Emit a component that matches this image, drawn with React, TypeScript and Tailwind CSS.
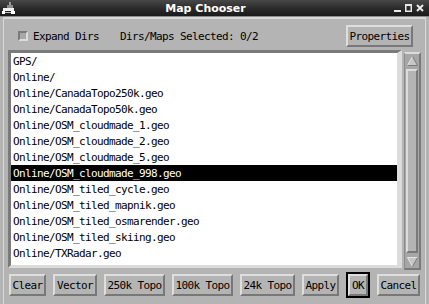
import React from "react";

const mono = "font-['DejaVu_Sans_Mono',monospace] text-[11px] tracking-[-0.62px] leading-none";

const maps = [
  "GPS/",
  "Online/",
  "Online/CanadaTopo250k.geo",
  "Online/CanadaTopo50k.geo",
  "Online/OSM_cloudmade_1.geo",
  "Online/OSM_cloudmade_2.geo",
  "Online/OSM_cloudmade_5.geo",
  "Online/OSM_cloudmade_998.geo",
  "Online/OSM_tiled_cycle.geo",
  "Online/OSM_tiled_mapnik.geo",
  "Online/OSM_tiled_osmarender.geo",
  "Online/OSM_tiled_skiing.geo",
  "Online/TXRadar.geo",
];

function TkButton({ label, w }: { label: string; w: string }) {
  return (
    <div
      className={`${w} h-[22px] flex items-center justify-center bg-[#b4b4b4] border-2 border-t-[#dedede] border-l-[#dedede] border-r-[#787878] border-b-[#787878] text-black ${mono}`}
    >
      {label}
    </div>
  );
}

function Arrow({ up }: { up: boolean }) {
  return (
    <div className="h-[13px] flex items-center justify-center">
      <svg width="11" height="10" viewBox="0 0 11 10">
        {up ? (
          <>
            <polygon points="5.5,0.5 10.5,9.5 0.5,9.5" fill="#c6c6c6" />
            <polyline points="0.5,9.5 5.5,0.5" stroke="#e6e6e6" fill="none" />
            <polyline points="5.5,0.5 10.5,9.5 0.5,9.5" stroke="#7c7c7c" fill="none" />
          </>
        ) : (
          <>
            <polygon points="0.5,0.5 10.5,0.5 5.5,9.5" fill="#c6c6c6" />
            <polyline points="5.5,9.5 0.5,0.5 10.5,0.5" stroke="#e6e6e6" fill="none" />
            <polyline points="10.5,0.5 5.5,9.5" stroke="#7c7c7c" fill="none" />
          </>
        )}
      </svg>
    </div>
  );
}

export default function App() {
  return (
    <div className="w-[429px] h-[304px] bg-[#b4b4b4] flex flex-col overflow-hidden">
      {/* title bar */}
      <div className="h-[16px] shrink-0 flex items-center bg-linear-to-b from-[#484848] via-[#2c2c2c] to-[#1a1a1a] relative">
        <svg className="ml-[2px]" width="13" height="13" viewBox="0 0 13 13">
          <rect x="7" y="0" width="2" height="4" fill="#9a9a9a" />
          <rect x="5" y="3" width="6" height="3" fill="#8c8c8c" />
          <rect x="1" y="6" width="11" height="3" fill="#f2f2f2" />
          <rect x="0" y="9" width="3" height="3" fill="#ffffff" />
          <rect x="9" y="9" width="4" height="3" fill="#ffffff" />
          <rect x="3" y="10" width="6" height="1" fill="#bdbdbd" />
        </svg>
        <div className="flex-1 text-center text-white font-bold text-[11px] leading-none font-['DejaVu_Sans',sans-serif] pl-[2px]">
          Map Chooser
        </div>
        <div className="flex items-center gap-[4px] mr-[5px]">
          <svg width="7" height="8" viewBox="0 0 7 8">
            <rect x="0" y="6" width="7" height="2" fill="#e8e8e8" />
          </svg>
          <svg width="7" height="8" viewBox="0 0 7 8">
            <rect x="0.75" y="0.75" width="5.5" height="6.5" fill="none" stroke="#e8e8e8" strokeWidth="1.5" />
            <rect x="0" y="0" width="7" height="2" fill="#e8e8e8" />
          </svg>
          <svg width="8" height="8" viewBox="0 0 8 8">
            <path d="M1 1 L7 7 M7 1 L1 7" stroke="#e8e8e8" strokeWidth="2" />
          </svg>
        </div>
      </div>
      <div className="h-px shrink-0 bg-[#8c8c8c]" />

      {/* inner frame */}
      <div className="ml-[3px] w-[423px] flex-1 flex flex-col border-t-2 border-l border-r border-[#d8d8d8]">
        <div className="mt-[6px] h-[22px] flex items-center pl-[14px] pr-[12px] text-black">
          <div className="w-[10px] h-[10px] bg-[#a8a8a8] border-2 border-t-[#7a7a7a] border-l-[#7a7a7a] border-r-[#dcdcdc] border-b-[#dcdcdc]" />
          <span className={`ml-[5px] ${mono}`}>Expand Dirs</span>
          <span className={`ml-[21px] ${mono}`}>Dirs/Maps Selected: 0/2</span>
          <div className="ml-auto">
            <TkButton label="Properties" w="w-[67px]" />
          </div>
        </div>

        <div className="mt-[3px] h-[220px] flex pl-[4px] pr-[4px] gap-[2px]">
          <div className="w-[394px] h-[218px] bg-white border-t-[3px] border-l-[3px] border-b-[3px] border-r-[5px] border-t-[#7a7a7a] border-l-[#7a7a7a] border-b-[#dcdcdc] border-r-[#dcdcdc] overflow-hidden">
            {maps.map((m) => {
              const sel = m === "Online/OSM_cloudmade_998.geo";
              return (
                <div
                  key={m}
                  className={`h-[16px] flex items-center pl-[2px] ${mono} ${
                    sel ? "bg-black text-white" : "text-black"
                  }`}
                >
                  {m}
                </div>
              );
            })}
          </div>
          <div className="mt-[2px] w-[17px] h-[218px] flex flex-col bg-[#a6a6a6] border-l border-l-[#8c8c8c] border-2 border-t-[#dcdcdc] border-r-[#7a7a7a] border-b-[#7a7a7a]">
            <Arrow up />
            <div className="flex-1 mx-px my-[2px] bg-[#b4b4b4] border-2 border-t-[#dcdcdc] border-l-[#dcdcdc] border-r-[#7a7a7a] border-b-[#7a7a7a]" />
            <Arrow up={false} />
          </div>
        </div>

        <div className="mt-[4px] h-[22px] flex items-center pl-[5px] gap-[7px]">
          <TkButton label="Clear" w="w-[37px]" />
          <TkButton label="Vector" w="w-[44px]" />
          <TkButton label="250k Topo" w="w-[61px]" />
          <TkButton label="100k Topo" w="w-[61px]" />
          <TkButton label="24k Topo" w="w-[55px]" />
          <TkButton label="Apply" w="w-[37px]" />
          <div className="-my-[2px] border-2 border-black">
            <TkButton label="OK" w="w-[20px]" />
          </div>
          <TkButton label="Cancel" w="w-[43px]" />
        </div>
      </div>
    </div>
  );
}
